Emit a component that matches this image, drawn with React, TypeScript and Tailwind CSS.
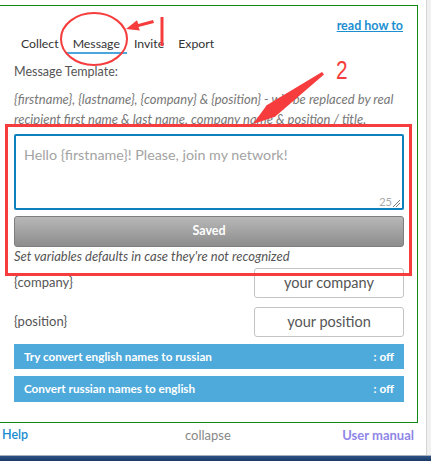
import React from "react";

const tabs = ["Collect", "Message", "Invite", "Export"];

function Annotations() {
  return (
    <svg className="pointer-events-none absolute inset-0" width="431" height="461" viewBox="0 0 431 461">
      <ellipse cx="94" cy="39" rx="33" ry="26" fill="none" stroke="#f63c3c" strokeWidth="2" />
      <polygon points="153,20 154,23 138.5,27 139.9,30.5 126,29 137,20.3 138.3,24" fill="#f63c3c" />
      <line x1="162" y1="17" x2="162" y2="46" stroke="#f63c3c" strokeWidth="3" />
      <polygon points="322,72 324,74.5 275,116.7 253,124 266.7,105.3" fill="#f63c3c" />
      <text x="336" y="79" fill="#f63c3c" fontFamily="'Liberation Sans', Arial, sans-serif" fontSize="26" transform="translate(336 0) scale(0.8 1) translate(-336 0)">
        2
      </text>
      <rect x="6.5" y="125.5" width="404" height="149" fill="none" stroke="#f63c3c" strokeWidth="3" />
    </svg>
  );
}

export default function App() {
  return (
    <div className="relative h-[461px] w-[431px] overflow-hidden bg-white font-['Lato',sans-serif]">
      <div className="flex h-[455px]">
        <div className="flex w-[426px] flex-col">
          <div className="ml-[-1px] mt-[5px] flex h-[418px] w-[419px] flex-col border border-[#118a11] pl-[14px] pr-[14px]">
            <div className="flex justify-end pt-[12px]">
              <a className="text-[12.5px] font-bold leading-[16px] text-[#1b8fd0] underline">read how to</a>
            </div>
            <div className="mt-[1px] flex">
              {tabs.map((t) => (
                <div
                  key={t}
                  className={
                    t === "Message"
                      ? "border-b-[2px] border-[#4aa6dc] px-[7px] text-[12.3px] leading-[17px] text-[#333]"
                      : "border-b-[2px] border-transparent px-[7px] text-[12.3px] leading-[17px] text-[#333]"
                  }
                >
                  {t}
                </div>
              ))}
            </div>
            <div className="mt-[10px] text-[12.5px] leading-[16px] text-[#555]">Message Template:</div>
            <p className="mt-[9px] text-[13px] italic leading-[20px] text-[#777]">
              {"{firstname}, {lastname}, {company} & {position} - will be replaced by real recipient first name & last name, company name & position / title."}
            </p>
            <div className="relative mt-[5px] h-[76px] w-[390px] rounded-[2px] border-2 border-[#0d80c0] pl-[8px] pt-[6px]">
              <span className="text-[14.3px] leading-[18px] text-[#a3a3a3]">Hello {"{firstname}"}! Please, join my network!</span>
              <div className="absolute bottom-0 right-[2px] flex items-end gap-[1px]">
                <span className="text-[11px] leading-[12px] text-[#aaa]">25</span>
                <svg width="7" height="7" viewBox="0 0 7 7" className="mb-[1px]">
                  <line x1="7" y1="0" x2="0" y2="7" stroke="#777" strokeWidth="1" />
                  <line x1="7" y1="3" x2="3" y2="7" stroke="#777" strokeWidth="1" />
                </svg>
              </div>
            </div>
            <button className="mt-[6px] flex h-[31px] w-[390px] items-center justify-center rounded-[3px] border border-[#7e7e7e] bg-gradient-to-b from-[#b8b8b8] to-[#8d8d8d] text-[12.5px] font-bold text-white">
              Saved
            </button>
            <div className="mt-[1px] text-[13px] italic leading-[16px] text-[#555]">
              Set variables defaults in case they're not recognized
            </div>
            <div className="mt-[4px] flex w-[390px] items-center justify-between">
              <span className="text-[13px] text-[#555]">{"{company}"}</span>
              <div className="flex h-[30px] w-[150px] items-center justify-center rounded-[3px] border border-[#c4c4c4] text-[14.5px] text-[#555]">
                your company
              </div>
            </div>
            <div className="mt-[9px] flex w-[390px] items-center justify-between">
              <span className="text-[13px] text-[#555]">{"{position}"}</span>
              <div className="flex h-[30px] w-[150px] items-center justify-center rounded-[3px] border border-[#c4c4c4] text-[14.5px] text-[#555]">
                your position
              </div>
            </div>
            <div className="mt-[7px] flex h-[25px] w-[390px] items-center justify-between bg-[#4eaadb] pl-[10px] pr-[10px] text-[11.7px] font-bold text-white">
              <span>Try convert english names to russian</span>
              <span>: off</span>
            </div>
            <div className="mt-[7px] flex h-[26px] w-[390px] items-center justify-between bg-[#4eaadb] pl-[10px] pr-[10px] text-[11.7px] font-bold text-white">
              <span>Convert russian names to english</span>
              <span>: off</span>
            </div>
          </div>
          <div className="flex h-[32px] items-start pl-[2px] pr-[12px] pt-[4px] leading-[16px]">
            <span className="w-[183px] text-[12.5px] font-semibold text-[#1a8cd0]">Help</span>
            <span className="text-[13px] text-[#888]">collapse</span>
            <span className="flex-1 text-right text-[13px] font-bold text-[#8f86e8]">User manual</span>
          </div>
        </div>
        <div className="w-[5px] border-l border-[#d4d4d4] bg-[#f0f0f0]" />
      </div>
      <div className="h-[6px] border-t border-[#a8b0bc] bg-gradient-to-b from-[#2c5287] to-[#1b3a66]" />
      <Annotations />
    </div>
  );
}
